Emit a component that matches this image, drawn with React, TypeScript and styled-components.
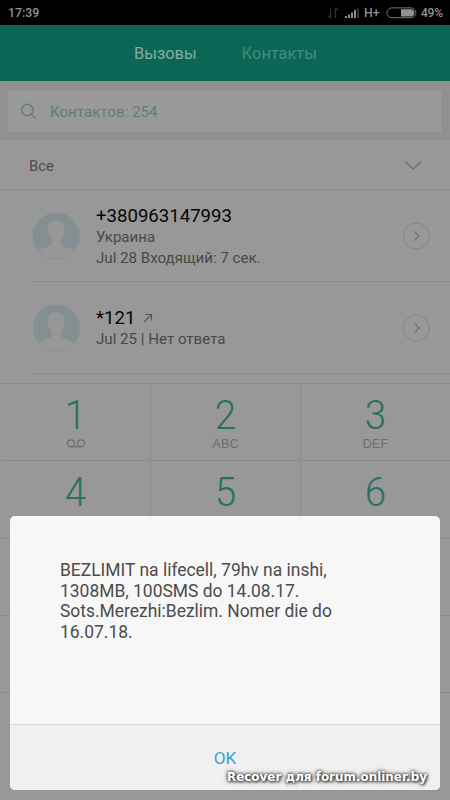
import React from "react";
import styled, { createGlobalStyle } from "styled-components";

const GlobalStyle = createGlobalStyle`
  * { box-sizing: border-box; }
  html, body { margin: 0; padding: 0; overflow: hidden; }
  body { font-family: Roboto, "Noto Sans", sans-serif; background: #989898; }
`;

const Screen = styled.div`
  position: relative;
  width: 450px;
  height: 800px;
  overflow: hidden;
  background: #989898;
  display: flex;
  flex-direction: column;
`;

const StatusBar = styled.div`
  height: 25px;
  flex: none;
  background: #000;
  color: #929292;
  display: flex;
  align-items: center;
  justify-content: space-between;
  padding: 1px 8px 0;
  font-size: 12.3px;
  font-weight: 500;
  line-height: 24px;
`;

const StatusIcons = styled.svg`
  display: block;
  margin-right: 4px;
`;

const StatusRight = styled.div`
  display: flex;
  align-items: center;
`;

const Network = styled.span`
  width: 21px;
  margin-right: 1px;
`;

const BatteryLevel = styled.span`
  font-size: 12px;
  letter-spacing: -0.2px;
  width: 21px;
`;

const Tabs = styled.div`
  height: 56px;
  flex: none;
  background: #0b6655;
  display: flex;
  justify-content: center;
  gap: 45px;
  line-height: 58px;
  padding-left: 1px;
  font-size: 16.4px;
`;

const Tab = styled.span<{ $active?: boolean }>`
  color: ${(p) => (p.$active ? "#83aca4" : "#458c80")};
`;

const SearchArea = styled.div`
  height: 58px;
  flex: none;
  background: #919191;
  padding: 9px 8px 6px;
`;

const SearchField = styled.div`
  height: 42px;
  background: #999;
  display: flex;
  align-items: center;
  padding-left: 12px;
  gap: 13px;
  color: #5c7e79;
  font-size: 15.1px;
  line-height: 44px;
  box-shadow: 0 0 0 1px #8d8d8d;
`;

const SearchText = styled.span`
  padding-top: 2px;
`;

const Filter = styled.div`
  height: 51px;
  flex: none;
  border-top: 1px solid #8b8b8b;
  border-bottom: 1px solid #8b8b8b;
  padding: 2px 28px 0 29px;
  display: flex;
  align-items: center;
  justify-content: space-between;
  color: #4c4c4c;
  font-size: 14.8px;
`;

const Call = styled.div`
  height: 92px;
  flex: none;
  display: flex;
  align-items: center;
  margin-left: 32px;
  padding-right: 20px;
  border-bottom: 1px solid #8c8c8c;
`;

const CallInfo = styled.div`
  flex: 1;
  margin-left: 16px;
  padding-top: 2px;
`;

const CallNumber = styled.div`
  color: #060606;
  font-size: 18.6px;
  line-height: 22px;
  display: flex;
  align-items: center;
  gap: 8px;
`;

const CallDetail = styled.div`
  color: #484848;
  font-size: 15.1px;
  line-height: 20.5px;
`;

const Keypad = styled.div`
  margin-top: 9px;
  flex: 1;
  display: grid;
  grid-template-columns: repeat(3, 150px);
  grid-auto-rows: 77.25px;
  border-top: 1px solid #8a8a8a;
`;

const Key = styled.div`
  border-bottom: 1px solid #8b8b8b;
  border-left: 1px solid #8b8b8b;
  display: flex;
  flex-direction: column;
  align-items: center;
  padding-top: 10px;

  &:nth-child(3n + 1) { border-left-color: transparent; }
`;

const Digit = styled.div`
  color: #28715f;
  font-size: 41.5px;
  font-weight: 300;
  line-height: 42px;
  transform: scaleX(0.93);
`;

const Letters = styled.div`
  color: #6d6d6d;
  font-family: "Liberation Sans", sans-serif;
  font-size: 12.5px;
  line-height: 14px;
  letter-spacing: 0.2px;
  height: 14px;
  margin-top: 1px;
`;

const VoicemailIcon = styled.svg`
  display: block;
  margin-top: 2px;
`;

const Dialog = styled.div`
  position: absolute;
  left: 10px;
  top: 516px;
  width: 430px;
  height: 274px;
  border-radius: 5px;
  overflow: hidden;
  background: #f7f7f7;
  display: flex;
  flex-direction: column;
`;

const Message = styled.div`
  flex: 1;
  padding: 44px 50px 0;
  color: #4c4c4c;
  font-size: 17.45px;
  line-height: 20.5px;
`;

const OkButton = styled.div`
  height: 66px;
  background: #f0f0f0;
  border-top: 1px solid #d7d7d7;
  color: #3c9fd4;
  font-size: 17.2px;
  line-height: 67px;
  text-align: center;
`;

const Watermark = styled.div`
  position: absolute;
  left: 227px;
  top: 769px;
  font: bold 11.95px/16px "DejaVu Sans", sans-serif;
  color: #fff;
  white-space: nowrap;
  text-shadow: 0 0 3px #333, 1px 1px 3px #333, 0 0 5px #555;
`;

const Avatar = () => (
  <svg width="48" height="48" viewBox="0 0 48 48">
    <circle cx="24.3" cy="24" r="22.9" fill="#838f92" stroke="#84908f" />
    <path
      d="M24.3 8.5c5.7 0 8.4 3.4 8.2 9 .9.4.8 3-.7 4.3-.6 3-1.5 4.3-3 5.8v4.8c2.6 2.7 9.6 3 13.2 5.8C37.5 43.8 31.5 46.5 24.3 46.5S11 43.8 6.8 38.2c3.6-2.8 10.5-3.2 13-5.8v-4.8c-1.5-1.5-2.4-2.8-3-5.8-1.5-1.3-1.6-3.9-.7-4.3-.2-5.6 2.5-9 8.2-9z"
      fill="#979797"
    />
  </svg>
);

const Details = () => (
  <svg width="28" height="28" viewBox="0 0 28 28" fill="none">
    <circle cx="14.5" cy="14" r="13" stroke="#858585" />
    <path d="M12.5 9.5l4.5 4.5-4.5 4.5" stroke="#6e6e6e" strokeWidth="1.2" />
  </svg>
);

const OutgoingArrow = () => (
  <svg width="10" height="10" viewBox="0 0 10 10" fill="none" stroke="#555" strokeWidth="1.1">
    <path d="M1 9L8.5 1.5M2.5 1.5h6v6" />
  </svg>
);

const Voicemail = () => (
  <VoicemailIcon width="20" height="9" viewBox="0 0 20 9" fill="none" stroke="#6d6d6d" strokeWidth="1.2">
    <circle cx="5" cy="4.3" r="3.5" />
    <circle cx="15" cy="4.3" r="3.5" />
    <path d="M5 7.8h10" />
  </VoicemailIcon>
);

const keys: { digit?: string; label?: React.ReactNode }[] = [
  { digit: "1", label: <Voicemail /> },
  { digit: "2", label: "ABC" },
  { digit: "3", label: "DEF" },
  { digit: "4" },
  { digit: "5" },
  { digit: "6" },
  {}, {}, {}, {}, {}, {},
];

export default function App() {
  return (
    <>
      <GlobalStyle />
      <Screen>
        <StatusBar>
          <span>17:39</span>
          <StatusRight>
            <StatusIcons width="33" height="14" viewBox="0 0 33 14" fill="none">
              <path d="M3.5 12V2M1 9.5L3.5 12M8.5 12V2M8.5 2l2.5 2.5" stroke="#333" strokeWidth="1.2" />
              <path d="M18 10h2v2h-2zM21 8.5h2V12h-2zM24 6.5h2V12h-2zM27 4h2v8h-2z" fill="#8c8c8c" />
              <path d="M30 2.5h2V12h-2z" fill="#333" />
            </StatusIcons>
            <Network>H+</Network>
            <StatusIcons width="31" height="12" viewBox="0 0 31 12" fill="none">
              <rect x="0.9" y="0.9" width="29" height="9.8" rx="4.9" stroke="#777" />
              <path d="M15 2.2h9.8a3.6 3.6 0 0 1 0 7.2H15z" fill="#929292" />
            </StatusIcons>
            <BatteryLevel>49%</BatteryLevel>
          </StatusRight>
        </StatusBar>
        <Tabs>
          <Tab $active>Вызовы</Tab>
          <Tab>Контакты</Tab>
        </Tabs>
        <SearchArea>
          <SearchField>
            <svg width="17" height="17" viewBox="0 0 17 17" fill="none" stroke="#5c7e79" strokeWidth="1.4">
              <circle cx="7.3" cy="7" r="5.7" />
              <path d="M11.3 11.2l4.5 4.3" />
            </svg>
            <SearchText>Контактов: 254</SearchText>
          </SearchField>
        </SearchArea>
        <Filter>
          <span>Все</span>
          <svg width="18" height="10" viewBox="0 0 18 10" fill="none" stroke="#696969" strokeWidth="1.2">
            <path d="M1.5 1L9 8l7.5-7" />
          </svg>
        </Filter>
        <Call>
          <Avatar />
          <CallInfo>
            <CallNumber>+380963147993</CallNumber>
            <CallDetail>Украина</CallDetail>
            <CallDetail>Jul 28 Входящий: 7 сек.</CallDetail>
          </CallInfo>
          <Details />
        </Call>
        <Call>
          <Avatar />
          <CallInfo>
            <CallNumber>
              *121 <OutgoingArrow />
            </CallNumber>
            <CallDetail>Jul 25 | Нет ответа</CallDetail>
          </CallInfo>
          <Details />
        </Call>
        <Keypad>
          {keys.map(({ digit, label }, i) => (
            <Key key={i}>
              {digit && <Digit>{digit}</Digit>}
              {label && <Letters>{label}</Letters>}
            </Key>
          ))}
        </Keypad>
        <Dialog>
          <Message>
            BEZLIMIT na lifecell, 79hv na inshi,
            <br />
            1308MB, 100SMS do 14.08.17.
            <br />
            Sots.Merezhi:Bezlim. Nomer die do
            <br />
            16.07.18.
          </Message>
          <OkButton>OK</OkButton>
        </Dialog>
        <Watermark>Recover для forum.onliner.by</Watermark>
      </Screen>
    </>
  );
}
